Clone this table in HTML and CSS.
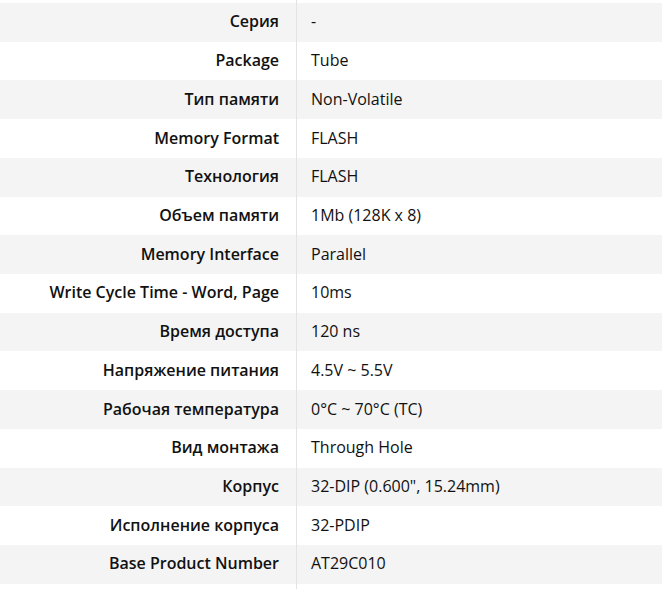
FILE: index.html
```html
<!DOCTYPE html>
<html lang="ru">
<head>
<meta charset="utf-8">
<link rel="stylesheet" href="styles.css">
</head>
<body>
<div class="specs">
  <div class="row spacer"><div class="label"></div><div class="value"></div></div>
  <div class="row"><div class="label">Серия</div><div class="value">-</div></div>
  <div class="row"><div class="label">Package</div><div class="value">Tube</div></div>
  <div class="row"><div class="label">Тип памяти</div><div class="value">Non-Volatile</div></div>
  <div class="row"><div class="label">Memory Format</div><div class="value">FLASH</div></div>
  <div class="row"><div class="label">Технология</div><div class="value">FLASH</div></div>
  <div class="row"><div class="label">Объем памяти</div><div class="value">1Mb (128K x 8)</div></div>
  <div class="row"><div class="label">Memory Interface</div><div class="value">Parallel</div></div>
  <div class="row"><div class="label">Write Cycle Time - Word, Page</div><div class="value">10ms</div></div>
  <div class="row"><div class="label">Время доступа</div><div class="value">120 ns</div></div>
  <div class="row"><div class="label">Напряжение питания</div><div class="value">4.5V ~ 5.5V</div></div>
  <div class="row"><div class="label">Рабочая температура</div><div class="value">0°C ~ 70°C (TC)</div></div>
  <div class="row"><div class="label">Вид монтажа</div><div class="value">Through Hole</div></div>
  <div class="row"><div class="label">Корпус</div><div class="value">32-DIP (0.600", 15.24mm)</div></div>
  <div class="row"><div class="label">Исполнение корпуса</div><div class="value">32-PDIP</div></div>
  <div class="row"><div class="label">Base Product Number</div><div class="value">AT29C010</div></div>
  <div class="row spacer tail"><div class="label"></div><div class="value"></div></div>
</div>
</body>
</html>
```

FILE: styles.css
```css
html, body {
  margin: 0;
  padding: 0;
  background: #ffffff;
}
body {
  font-family: "Open Sans", "Noto Sans", sans-serif;
  color: #111111;
  overflow: hidden;
}
.specs {
  width: 662px;
  display: flex;
  flex-direction: column;
}
.row {
  display: grid;
  grid-template-columns: 297px 1fr;
  height: 38.73px;
  align-items: stretch;
}
.row:nth-child(even) {
  background: #f4f4f4;
}
.row.spacer {
  height: 3px;
  background: #ffffff;
}
.row.tail {
  height: 6px;
}
.label {
  font-weight: 600;
  font-size: 16px;
  text-align: right;
  padding-right: 17px;
  padding-bottom: 2px;
  border-right: 1px solid #e3e3e3;
  display: flex;
  align-items: center;
  justify-content: flex-end;
  white-space: nowrap;
}
.value {
  font-size: 16px;
  padding-left: 14px;
  padding-bottom: 2px;
  display: flex;
  align-items: center;
  white-space: nowrap;
}
```
